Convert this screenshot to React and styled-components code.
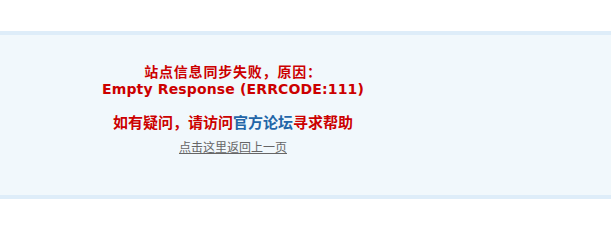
import React from "react";
import styled, { createGlobalStyle } from "styled-components";

const GlobalStyle = createGlobalStyle`
  html, body {
    margin: 0;
    padding: 0;
    background: #fff;
  }
  body {
    font-family: "DejaVu Sans", "Noto Sans CJK SC", sans-serif;
    font-size: 12px;
  }
`;

const Page = styled.div`
  padding-top: 31px;
`;

const MessageBox = styled.div`
  background: #f1f8fc;
  border-top: 4px solid #deedf9;
  border-bottom: 4px solid #deedf9;
  height: 168px;
  box-sizing: border-box;
  padding-top: 27px;
`;

const Inner = styled.div`
  width: 466px;
  text-align: center;
`;

const Alert = styled.p`
  margin: 0;
  color: #cc0000;
  font-weight: bold;
  font-size: 14px;
  line-height: 18px;
  letter-spacing: ${(p) => (p.latin ? "0.15px" : "0.8px")};
  font-family: ${(p) =>
    p.latin
      ? '"DejaVu Sans", "Noto Sans CJK SC", sans-serif'
      : '"Noto Sans CJK SC", sans-serif'};
`;

const Help = styled.p`
  margin: 14px 0 0;
  color: #cc0000;
  font-weight: bold;
  font-size: 15px;
  line-height: 20px;
  font-family: "Noto Sans CJK SC", sans-serif;
`;

const ForumLink = styled.a`
  color: #2366a8;
  text-decoration: none;
`;

const BackLink = styled.a`
  display: inline-block;
  margin-top: 7px;
  color: #666;
  font-size: 12px;
  line-height: 16px;
  font-family: "Noto Sans CJK SC", sans-serif;
  text-decoration: underline;
`;

function App() {
  return (
    <>
      <GlobalStyle />
      <Page>
        <MessageBox>
          <Inner>
            <Alert>站点信息同步失败，原因：</Alert>
            <Alert latin>Empty Response (ERRCODE:111)</Alert>
            <Help>
              如有疑问，请访问<ForumLink href="#">官方论坛</ForumLink>寻求帮助
            </Help>
            <BackLink href="#">点击这里返回上一页</BackLink>
          </Inner>
        </MessageBox>
      </Page>
    </>
  );
}

export default App;
